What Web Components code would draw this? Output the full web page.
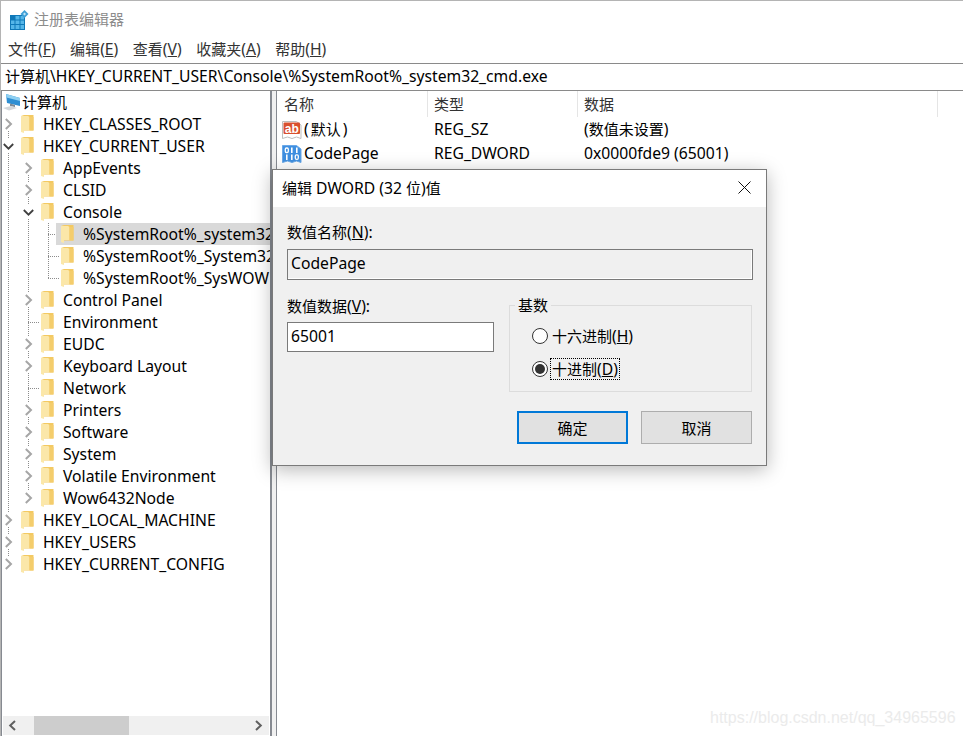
<!DOCTYPE html>
<html lang="zh">
<head>
<meta charset="utf-8">
<title>注册表编辑器</title>
<style>
  html, body { margin: 0; padding: 0; background: #fff; }
  body { font: 15.7px/20px "Noto Sans", "Noto Sans CJK SC", sans-serif; color: #000; }
</style>
</head>
<body>
<reg-app>
  <reg-titlebar>注册表编辑器</reg-titlebar>
  <reg-menubar>
    <span>文件(<u>F</u>)</span><span>编辑(<u>E</u>)</span><span>查看(<u>V</u>)</span><span>收藏夹(<u>A</u>)</span><span>帮助(<u>H</u>)</span>
  </reg-menubar>
  <reg-addressbar>计算机\HKEY_CURRENT_USER\Console\%SystemRoot%_system32_cmd.exe</reg-addressbar>
  <reg-tree slot="tree">
    <reg-tree-row level="0" icon="computer">计算机</reg-tree-row>
    <reg-tree-row level="1" expander="closed">HKEY_CLASSES_ROOT</reg-tree-row>
    <reg-tree-row level="1" expander="open">HKEY_CURRENT_USER</reg-tree-row>
    <reg-tree-row level="2" expander="closed">AppEvents</reg-tree-row>
    <reg-tree-row level="2" expander="closed">CLSID</reg-tree-row>
    <reg-tree-row level="2" expander="open">Console</reg-tree-row>
    <reg-tree-row level="3" selected>%SystemRoot%_system32</reg-tree-row>
    <reg-tree-row level="3">%SystemRoot%_System32</reg-tree-row>
    <reg-tree-row level="3">%SystemRoot%_SysWOW</reg-tree-row>
    <reg-tree-row level="2" expander="closed">Control Panel</reg-tree-row>
    <reg-tree-row level="2">Environment</reg-tree-row>
    <reg-tree-row level="2" expander="closed">EUDC</reg-tree-row>
    <reg-tree-row level="2" expander="closed">Keyboard Layout</reg-tree-row>
    <reg-tree-row level="2">Network</reg-tree-row>
    <reg-tree-row level="2" expander="closed">Printers</reg-tree-row>
    <reg-tree-row level="2" expander="closed">Software</reg-tree-row>
    <reg-tree-row level="2" expander="closed">System</reg-tree-row>
    <reg-tree-row level="2" expander="closed">Volatile Environment</reg-tree-row>
    <reg-tree-row level="2" expander="closed">Wow6432Node</reg-tree-row>
    <reg-tree-row level="1" expander="closed">HKEY_LOCAL_MACHINE</reg-tree-row>
    <reg-tree-row level="1" expander="closed">HKEY_USERS</reg-tree-row>
    <reg-tree-row level="1" expander="closed">HKEY_CURRENT_CONFIG</reg-tree-row>
  </reg-tree>
  <reg-list slot="list">
    <reg-list-row icon="sz" type="REG_SZ" data="(数值未设置)">(默认)</reg-list-row>
    <reg-list-row icon="bin" type="REG_DWORD" data="0x0000fde9 (65001)">CodePage</reg-list-row>
    <reg-list-row icon="blank"></reg-list-row>
  </reg-list>
  <reg-dialog slot="overlay"></reg-dialog>
  <reg-watermark slot="overlay">https://blog.csdn.net/qq_34965596</reg-watermark>
</reg-app>

<script>
"use strict";

const UI_FONT = `"Noto Sans", "Noto Sans CJK SC", sans-serif`;

class RegApp extends HTMLElement {
  constructor() {
    super();
    this.attachShadow({ mode: "open" }).innerHTML = /*html*/ `
      <style>
        :host { display: block; position: relative; width: 963px; height: 736px; overflow: hidden; background: #fff; font: 15.7px/20px ${UI_FONT}; }
        #frame { display: flex; flex-direction: column; height: 100%; border-left: 1px solid #b4b4b4; border-top: 1px solid #b4b4b4; box-sizing: border-box; }
        #panes { flex: 1; min-height: 0; display: flex; }
        #split { width: 4px; background: #f0f0f0; flex: none; }
      </style>
      <div id="frame">
        <slot></slot>
        <div id="panes">
          <slot name="tree"></slot>
          <div id="split"></div>
          <slot name="list"></slot>
        </div>
      </div>
      <slot name="overlay"></slot>
    `;
  }
}

class RegTitlebar extends HTMLElement {
  constructor() {
    super();
    this.attachShadow({ mode: "open" }).innerHTML = /*html*/ `
      <style>
        :host { display: flex; align-items: center; height: 36px; padding: 0 0 2px 9px; color: #8c8c8c; gap: 5px; }
      </style>
      <svg width="19" height="22" viewBox="0 0 19 22">
        <rect x="0" y="7" width="15" height="15" fill="#0f78b8"/>
        <g fill="#55b6e8">
          <rect x="5.500" y="8" width="4" height="3.500"/><rect x="10.500" y="8" width="3.500" height="3.500"/>
          <rect x="1" y="12.500" width="3.500" height="3.500"/><rect x="5.500" y="12.500" width="4" height="3.500"/><rect x="10.500" y="12.500" width="3.500" height="3.500"/>
          <rect x="1" y="17" width="3.500" height="4"/><rect x="5.500" y="17" width="4" height="4"/><rect x="10.500" y="17" width="3.500" height="4"/>
        </g>
        <path d="M14.500 2l4 4-4 4-4-4z" fill="#3f9fd6"/><path d="M14.500 4.500l1.500 1.500-1.500 1.500L13 6z" fill="#bfe6f8"/>
      </svg>
      <slot></slot>
    `;
  }
}

class RegMenubar extends HTMLElement {
  constructor() {
    super();
    this.attachShadow({ mode: "open" }).innerHTML = /*html*/ `
      <style>
        :host { display: flex; gap: 14.500px; align-items: center; height: 20px; padding: 0 0 4px 7px; color: #333; }
      </style>
      <slot></slot>
    `;
  }
}

class RegAddressbar extends HTMLElement {
  constructor() {
    super();
    this.attachShadow({ mode: "open" }).innerHTML = /*html*/ `
      <style>
        :host { display: flex; align-items: center; height: 24px; padding: 0 0 2px 4px; border-top: 1px solid #8a8a8a; border-bottom: 1px solid #8a8a8a; white-space: nowrap; overflow: hidden; }
      </style>
      <slot></slot>
    `;
  }
}

class RegTree extends HTMLElement {
  constructor() {
    super();
    const off = 91;
    const seg = [
      [8, 131, 139], [8, 153, 513], [8, 527, 535], [8, 549, 557],
      [28, 175, 183], [28, 197, 205], [28, 219, 293], [28, 307, 337], [28, 351, 359],
      [28, 373, 403], [28, 417, 425], [28, 439, 447], [28, 461, 469], [28, 483, 491],
      [48, 223, 278],
    ].map(([x, a, b]) => `M${x - 1.5} ${a - off}V${b - off}`).join("");
    const hor = [[234, 48, 60], [256, 48, 60], [278, 48, 60], [322, 28, 40], [388, 28, 40]]
      .map(([y, a, b]) => `M${a - 2} ${y - off + 0.5}H${b - 2}`).join("");
    this.attachShadow({ mode: "open" }).innerHTML = /*html*/ `
      <style>
        :host { display: flex; flex-direction: column; width: 268px; flex: none; border-right: 2px solid #868a91; border-left: 1px solid #868a91; min-height: 0; }
        #view { position: relative; flex: 1; min-height: 0; overflow: hidden; }
        #guides { position: absolute; left: 0; top: 0; width: 268px; height: 625px; pointer-events: none; }
      </style>
      <div id="view">
        <svg id="guides" viewBox="0 0 268 625"><path d="${seg}${hor}" stroke="#8c8c8c" fill="none" stroke-width="1" stroke-dasharray="1 1"/></svg>
        <div id="rows"><slot></slot></div>
      </div>
      <reg-scrollbar></reg-scrollbar>
    `;
  }
}

class RegTreeRow extends HTMLElement {
  constructor() {
    super();
    const level = Number(this.getAttribute("level"));
    const exp = this.getAttribute("expander");
    const computer = this.getAttribute("icon") === "computer";
    const chevron = exp === "open"
      ? `<svg width="12" height="12" viewBox="0 0 12 12"><path d="M.8 4L5.500 8.700 10.200 4" fill="none" stroke="#404040" stroke-width="1.800"/></svg>`
      : exp === "closed"
      ? `<svg width="12" height="12" viewBox="0 0 12 12"><path d="M2.800 1L8 6l-5.200 5" fill="none" stroke="#a6a6a6" stroke-width="2"/></svg>`
      : "";
    const icon = computer
      ? `<svg width="18" height="18" viewBox="0 0 18 18" style="margin-right:1px">
           <path d="M3 1l14 4v8L4 10z" fill="#2f8fd3"/><path d="M3 1l14 4v3L3.500 4.500z" fill="#8fd0f2"/>
           <path d="M7 10.500l5 1.500v2l-5-1z" fill="#7f8a94"/>
           <path d="M0 15l8-2 6 2-8 2.500z" fill="#d3d7db"/>
         </svg>`
      : `<svg width="13" height="18" viewBox="0 0 13 18" style="margin-right:9px">
           <path d="M0 1L3 0h9.500v15.500H3z" fill="#f3c962"/>
           <path d="M0 1h7l1.500 1v13H3L3 18 0 17z" fill="#fbe7a9"/>
           <path d="M8.500 2H12.500v13.500H8.500z" fill="#f4cd6c"/>
         </svg>`;
    const itemLeft = computer ? 0 : (level - 1) * 20 + 14;
    this.attachShadow({ mode: "open" }).innerHTML = /*html*/ `
      <style>
        :host { display: block; position: relative; height: 22px; white-space: nowrap; }
        #exp { position: absolute; left: ${(level - 1) * 20 + 1}px; top: 5px; height: 12px; }
        #item { display: flex; align-items: center; height: 22px; margin-left: ${itemLeft}px; padding-left: ${computer ? 1 : 5}px; overflow: hidden; }
        :host([selected]) #item { background: #d9d9d9; }
        svg { flex: none; display: block; }
      </style>
      <div id="exp">${chevron}</div>
      <div id="item">${icon}<slot></slot></div>
    `;
  }
}

class RegScrollbar extends HTMLElement {
  constructor() {
    super();
    this.attachShadow({ mode: "open" }).innerHTML = /*html*/ `
      <style>
        :host { display: flex; height: 19px; flex: none; margin: 0 1px 1px 1px; background: #f0f0f0; align-items: center; }
        .arrow { flex: none; display: flex; justify-content: center; box-sizing: border-box; }
        #thumb { width: 95px; height: 19px; background: #cdcdcd; flex: none; }
        #track { flex: 1; }
        svg { display: block; }
      </style>
      <div class="arrow" style="width:31px;padding-right:13px"><svg width="9" height="11" viewBox="0 0 9 11"><path d="M7 1L2.200 5.500 7 10" fill="none" stroke="#606060" stroke-width="2"/></svg></div>
      <div id="thumb"></div>
      <div id="track"></div>
      <div class="arrow" style="width:30px;padding-left:8px"><svg width="9" height="11" viewBox="0 0 9 11"><path d="M2 1l4.800 4.500L2 10" fill="none" stroke="#606060" stroke-width="2"/></svg></div>
    `;
  }
}

class RegList extends HTMLElement {
  constructor() {
    super();
    this.attachShadow({ mode: "open" }).innerHTML = /*html*/ `
      <style>
        :host { display: block; flex: 1; min-width: 0; border-left: 1px solid #868a91; }
        #head { display: flex; height: 26px; color: #333; }
        #head div { box-sizing: border-box; padding-left: 7px; line-height: 26px; border-right: 1px solid #e5e5e5; height: 26px; }
      </style>
      <div id="head">
        <div style="width:151px">名称</div>
        <div style="width:150px;padding-left:6px">类型</div>
        <div style="width:360px;padding-left:6px">数据</div>
      </div>
      <slot></slot>
    `;
  }
}

class RegListRow extends HTMLElement {
  constructor() {
    super();
    const kind = this.getAttribute("icon");
    const sheet = (fill, edge) => `<path d="M.5 1.500h14l4.500 3.500v13.500l-4.500-1.500-4.500 1.500-4.500-1.500-5 1.500z" fill="${fill}" stroke="${edge}" stroke-width="1"/>`;
    const art = {
      sz: `${sheet("#fff", "#bdbdbd")}<rect x="1.500" y="2.500" width="16.500" height="11.500" rx="1" fill="#d9502e"/>
           <text x="9.800" y="12.500" text-anchor="middle" font-family="Liberation Sans, sans-serif" font-weight="700" font-size="12" fill="#fff">ab</text>`,
      bin: `${sheet("#3f8fe0", "#6aa8e8")}
           <g fill="none" stroke="#fff" stroke-width="1.300"><rect x="3.300" y="4" width="3" height="4.500" rx="1.200"/><rect x="13.300" y="10.800" width="3" height="4.500" rx="1.200"/></g>
           <path d="M9.800 3.500v5.500M14.800 3.500v5.500M4.800 10.500v5.500M9.800 10.500v5.500" stroke="#fff" stroke-width="1.600"/>`,
      blank: sheet("#e8e8e8", "#c4c4c4"),
    }[kind];
    this.attachShadow({ mode: "open" }).innerHTML = /*html*/ `
      <style>
        :host { display: flex; align-items: center; height: 24px; white-space: nowrap; }
        #name { width: 151px; box-sizing: border-box; display: flex; align-items: center; padding-left: 5px; gap: 2px; }
        #type { width: 150px; box-sizing: border-box; padding-left: 6px; }
        #data { padding-left: 6px; }
        svg { flex: none; display: block; margin-top: 1px; }
      </style>
      <div id="name"><svg width="20" height="19" viewBox="0 0 20 19">${art}</svg><slot></slot></div>
      <div id="type">${this.getAttribute("type") || ""}</div>
      <div id="data">${this.getAttribute("data") || ""}</div>
    `;
  }
}

class RegRadio extends HTMLElement {
  constructor() {
    super();
    this.attachShadow({ mode: "open" }).innerHTML = /*html*/ `
      <style>
        :host { display: flex; align-items: center; gap: 3px; height: 22px; }
        #dot { width: 16px; height: 16px; border: 1px solid #333; border-radius: 50%; background: #fff; box-sizing: border-box; flex: none; display: flex; align-items: center; justify-content: center; }
        #dot i { display: none; width: 10px; height: 10px; border-radius: 50%; background: #333; }
        :host([checked]) #dot i { display: block; }
        :host([checked]) #label { outline: 1px dotted #000; }
        #label { padding: 0 1px; line-height: 20px; }
      </style>
      <div id="dot"><i></i></div><div id="label"><slot></slot></div>
    `;
  }
}

class RegButton extends HTMLElement {
  constructor() {
    super();
    this.attachShadow({ mode: "open" }).innerHTML = /*html*/ `
      <style>
        :host { display: flex; align-items: center; justify-content: center; width: 111px; height: 33px; box-sizing: border-box; background: #e1e1e1; border: 1px solid #adadad; }
        :host([primary]) { border: 2px solid #0078d7; }
      </style>
      <slot></slot>
    `;
  }
}

class RegDialog extends HTMLElement {
  constructor() {
    super();
    this.attachShadow({ mode: "open" }).innerHTML = /*html*/ `
      <style>
        :host { position: absolute; left: 272px; top: 169px; width: 495px; height: 297px; box-sizing: border-box; border: 1px solid #7a7a7a; background: #f0f0f0; box-shadow: 0 4px 18px rgba(0,0,0,.28); display: flex; flex-direction: column; }
        #title { height: 35px; padding: 0 15px 2px 9px; background: #fff; display: flex; align-items: center; justify-content: space-between; flex: none; }
        #body { flex: 1; padding: 15px 13px 0 14px; display: flex; flex-direction: column; }
        #name-label, #value-label { height: 20px; line-height: 20px; }
        .field { box-sizing: border-box; border: 1px solid #7a7a7a; height: 31px; line-height: 27px; padding-left: 3px; }
        #name-field { margin-top: 7px; background: #f0f0f0; box-shadow: inset -1px -1px 0 #fff; }
        #grid { display: grid; grid-template-columns: 207px 243px; column-gap: 15px; margin-top: 16px; }
        #value-field { margin-top: 6px; background: #fff; height: 30px; line-height: 26px; }
        #base { position: relative; height: 87px; margin-top: 9px; box-sizing: border-box; border: 1px solid #dcdcdc; padding: 19px 0 0 22px; display: flex; flex-direction: column; gap: 11px; }
        #legend { position: absolute; left: 5px; top: -10px; padding: 0 3px; background: #f0f0f0; line-height: 18px; }
        #buttons { display: flex; justify-content: flex-end; gap: 13px; margin-top: 19px; padding-right: 1px; }
      </style>
      <div id="title">
        <span>编辑 DWORD (32 位)值</span>
        <svg width="13" height="13" viewBox="0 0 13 13"><path d="M.5.500l12 12M12.500.500l-12 12" stroke="#111" fill="none"/></svg>
      </div>
      <div id="body">
        <div id="name-label">数值名称(<u>N</u>):</div>
        <div class="field" id="name-field">CodePage</div>
        <div id="grid">
          <div>
            <div id="value-label">数值数据(<u>V</u>):</div>
            <div class="field" id="value-field">65001</div>
          </div>
          <div id="base">
            <div id="legend">基数</div>
            <reg-radio>十六进制(<u>H</u>)</reg-radio>
            <reg-radio checked>十进制(<u>D</u>)</reg-radio>
          </div>
        </div>
        <div id="buttons">
          <reg-button primary>确定</reg-button>
          <reg-button>取消</reg-button>
        </div>
      </div>
    `;
  }
}

class RegWatermark extends HTMLElement {
  constructor() {
    super();
    this.attachShadow({ mode: "open" }).innerHTML = /*html*/ `
      <style>
        :host { position: absolute; left: 710px; top: 708px; color: #ebebeb; font: 16px/20px "Liberation Sans", sans-serif; white-space: nowrap; }
      </style>
      <slot></slot>
    `;
  }
}

customElements.define("reg-app", RegApp);
customElements.define("reg-titlebar", RegTitlebar);
customElements.define("reg-menubar", RegMenubar);
customElements.define("reg-addressbar", RegAddressbar);
customElements.define("reg-tree", RegTree);
customElements.define("reg-tree-row", RegTreeRow);
customElements.define("reg-scrollbar", RegScrollbar);
customElements.define("reg-list", RegList);
customElements.define("reg-list-row", RegListRow);
customElements.define("reg-radio", RegRadio);
customElements.define("reg-button", RegButton);
customElements.define("reg-dialog", RegDialog);
customElements.define("reg-watermark", RegWatermark);

// Latin runs are set a bit larger than CJK ones, so wrap the CJK runs in a 15px span
function shrinkCjk(root) {
  const walker = document.createTreeWalker(root, NodeFilter.SHOW_TEXT);
  const nodes = [];
  while (walker.nextNode()) {
    const tag = walker.currentNode.parentNode.nodeName;
    if (tag !== "STYLE" && tag !== "SCRIPT" && /[\u4e00-\u9fff]/.test(walker.currentNode.data)) {
      nodes.push(walker.currentNode);
    }
  }
  nodes.forEach((node) => {
    const frag = document.createDocumentFragment();
    node.data.split(/([\u4e00-\u9fff]+)/).forEach((part, i) => {
      if (i % 2) {
        const span = document.createElement("span");
        span.style.fontSize = "15px";
        span.textContent = part;
        frag.append(span);
      } else if (part) {
        frag.append(part);
      }
    });
    node.replaceWith(frag);
  });
}

function shrinkAll(root) {
  shrinkCjk(root);
  root.querySelectorAll("*").forEach((el) => {
    if (el.shadowRoot) shrinkAll(el.shadowRoot);
  });
}

shrinkAll(document.body);
</script>
</body>
</html>
